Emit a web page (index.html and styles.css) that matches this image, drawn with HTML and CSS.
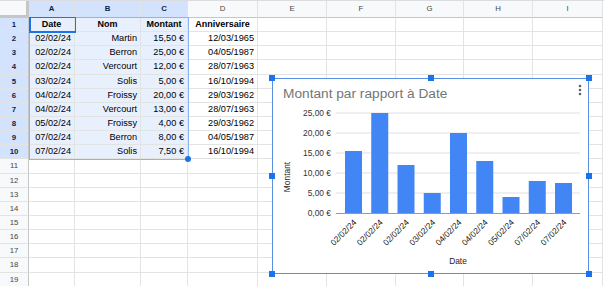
FILE: index.html
```html
<!DOCTYPE html>
<html lang="fr">
<head>
  <meta charset="UTF-8">
  <title>Feuille - Montant par rapport à Date</title>
  <link rel="stylesheet" href="styles.css">
</head>
<body>
  <div class="sheet-wrap">
    <div class="sheet">
      <!-- column headers -->
      <div class="corner"></div>
      <div class="ch on">A</div><div class="ch on">B</div><div class="ch on">C</div><div class="ch">D</div>
      <div class="ch">E</div><div class="ch">F</div><div class="ch">G</div><div class="ch">H</div><div class="ch">I</div>

      <!-- row 1 -->
      <div class="rh on">1</div>
      <div class="c sel hd">Date</div><div class="c sel hd">Nom</div><div class="c sel hd">Montant</div><div class="c hd">Anniversaire</div>
      <div class="c"></div><div class="c"></div><div class="c"></div><div class="c"></div><div class="c"></div>

      <!-- row 2 -->
      <div class="rh on">2</div>
      <div class="c sel num">02/02/24</div><div class="c sel num">Martin</div><div class="c sel num">15,50 €</div><div class="c num">12/03/1965</div>
      <div class="c"></div><div class="c"></div><div class="c"></div><div class="c"></div><div class="c"></div>

      <!-- row 3 -->
      <div class="rh on">3</div>
      <div class="c sel num">02/02/24</div><div class="c sel num">Berron</div><div class="c sel num">25,00 €</div><div class="c num">04/05/1987</div>
      <div class="c"></div><div class="c"></div><div class="c"></div><div class="c"></div><div class="c"></div>

      <!-- row 4 -->
      <div class="rh on">4</div>
      <div class="c sel num">02/02/24</div><div class="c sel num">Vercourt</div><div class="c sel num">12,00 €</div><div class="c num">28/07/1963</div>
      <div class="c"></div><div class="c"></div><div class="c"></div><div class="c"></div><div class="c"></div>

      <!-- row 5 -->
      <div class="rh on">5</div>
      <div class="c sel num">03/02/24</div><div class="c sel num">Solis</div><div class="c sel num">5,00 €</div><div class="c num">16/10/1994</div>
      <div class="c"></div><div class="c"></div><div class="c"></div><div class="c"></div><div class="c"></div>

      <!-- row 6 -->
      <div class="rh on">6</div>
      <div class="c sel num">04/02/24</div><div class="c sel num">Froissy</div><div class="c sel num">20,00 €</div><div class="c num">29/03/1962</div>
      <div class="c"></div><div class="c"></div><div class="c"></div><div class="c"></div><div class="c"></div>

      <!-- row 7 -->
      <div class="rh on">7</div>
      <div class="c sel num">04/02/24</div><div class="c sel num">Vercourt</div><div class="c sel num">13,00 €</div><div class="c num">28/07/1963</div>
      <div class="c"></div><div class="c"></div><div class="c"></div><div class="c"></div><div class="c"></div>

      <!-- row 8 -->
      <div class="rh on">8</div>
      <div class="c sel num">05/02/24</div><div class="c sel num">Froissy</div><div class="c sel num">4,00 €</div><div class="c num">29/03/1962</div>
      <div class="c"></div><div class="c"></div><div class="c"></div><div class="c"></div><div class="c"></div>

      <!-- row 9 -->
      <div class="rh on">9</div>
      <div class="c sel num">07/02/24</div><div class="c sel num">Berron</div><div class="c sel num">8,00 €</div><div class="c num">04/05/1987</div>
      <div class="c"></div><div class="c"></div><div class="c"></div><div class="c"></div><div class="c"></div>

      <!-- row 10 -->
      <div class="rh on">10</div>
      <div class="c sel num">07/02/24</div><div class="c sel num">Solis</div><div class="c sel num">7,50 €</div><div class="c num">16/10/1994</div>
      <div class="c"></div><div class="c"></div><div class="c"></div><div class="c"></div><div class="c"></div>

      <!-- empty rows -->
      <div class="rh">11</div>
      <div class="c"></div><div class="c"></div><div class="c"></div><div class="c"></div><div class="c"></div><div class="c"></div><div class="c"></div><div class="c"></div><div class="c"></div>
      <div class="rh">12</div>
      <div class="c"></div><div class="c"></div><div class="c"></div><div class="c"></div><div class="c"></div><div class="c"></div><div class="c"></div><div class="c"></div><div class="c"></div>
      <div class="rh">13</div>
      <div class="c"></div><div class="c"></div><div class="c"></div><div class="c"></div><div class="c"></div><div class="c"></div><div class="c"></div><div class="c"></div><div class="c"></div>
      <div class="rh">14</div>
      <div class="c"></div><div class="c"></div><div class="c"></div><div class="c"></div><div class="c"></div><div class="c"></div><div class="c"></div><div class="c"></div><div class="c"></div>
      <div class="rh">15</div>
      <div class="c"></div><div class="c"></div><div class="c"></div><div class="c"></div><div class="c"></div><div class="c"></div><div class="c"></div><div class="c"></div><div class="c"></div>
      <div class="rh">16</div>
      <div class="c"></div><div class="c"></div><div class="c"></div><div class="c"></div><div class="c"></div><div class="c"></div><div class="c"></div><div class="c"></div><div class="c"></div>
      <div class="rh">17</div>
      <div class="c"></div><div class="c"></div><div class="c"></div><div class="c"></div><div class="c"></div><div class="c"></div><div class="c"></div><div class="c"></div><div class="c"></div>
      <div class="rh">18</div>
      <div class="c"></div><div class="c"></div><div class="c"></div><div class="c"></div><div class="c"></div><div class="c"></div><div class="c"></div><div class="c"></div><div class="c"></div>
      <div class="rh">19</div>
      <div class="c"></div><div class="c"></div><div class="c"></div><div class="c"></div><div class="c"></div><div class="c"></div><div class="c"></div><div class="c"></div><div class="c"></div>
    </div>

    <!-- selection A1:C10 -->
    <div class="selection"></div>
    <div class="active-cell"></div>
    <div class="fill-handle"></div>

    <!-- embedded chart -->
    <div class="chart">
      <svg class="chart-svg" width="315" height="194" viewBox="0 0 315 194">
        <text class="chart-title" x="10" y="19">Montant par rapport à Date</text>
        <circle class="dot" cx="307" cy="7" r="1.3"/>
        <circle class="dot" cx="307" cy="11" r="1.3"/>
        <circle class="dot" cx="307" cy="15" r="1.3"/>

        <g class="grid">
          <line x1="63" y1="34" x2="307" y2="34"/>
          <line x1="63" y1="54" x2="307" y2="54"/>
          <line x1="63" y1="74" x2="307" y2="74"/>
          <line x1="63" y1="94" x2="307" y2="94"/>
          <line x1="63" y1="114" x2="307" y2="114"/>
        </g>

        <g class="ylab">
          <text x="58" y="37">25,00 €</text>
          <text x="58" y="57">20,00 €</text>
          <text x="58" y="77">15,00 €</text>
          <text x="58" y="97">10,00 €</text>
          <text x="58" y="117">5,00 €</text>
          <text x="58" y="137">0,00 €</text>
        </g>

        <g class="bars">
          <rect x="72" y="72" width="17" height="62"/>
          <rect x="98.25" y="34" width="17" height="100"/>
          <rect x="124.5" y="86" width="17" height="48"/>
          <rect x="150.75" y="114" width="17" height="20"/>
          <rect x="177" y="54" width="17" height="80"/>
          <rect x="203.25" y="82" width="17" height="52"/>
          <rect x="229.5" y="118" width="17" height="16"/>
          <rect x="255.75" y="102" width="17" height="32"/>
          <rect x="282" y="104" width="17" height="30"/>
        </g>
        <line class="baseline" x1="63" y1="134.5" x2="307" y2="134.5"/>

        <g class="xlab">
          <text transform="translate(84 144) rotate(-45)">02/02/24</text>
          <text transform="translate(110.25 144) rotate(-45)">02/02/24</text>
          <text transform="translate(136.5 144) rotate(-45)">02/02/24</text>
          <text transform="translate(162.75 144) rotate(-45)">03/02/24</text>
          <text transform="translate(189 144) rotate(-45)">04/02/24</text>
          <text transform="translate(215.25 144) rotate(-45)">04/02/24</text>
          <text transform="translate(241.5 144) rotate(-45)">05/02/24</text>
          <text transform="translate(267.75 144) rotate(-45)">07/02/24</text>
          <text transform="translate(294 144) rotate(-45)">07/02/24</text>
        </g>

        <text class="axis-title" x="185" y="185">Date</text>
        <text class="axis-title" transform="translate(17 98) rotate(-90)">Montant</text>
      </svg>

      <span class="handle tl"></span>
      <span class="handle tm"></span>
      <span class="handle tr"></span>
      <span class="handle ml"></span>
      <span class="handle mr"></span>
      <span class="handle bl"></span>
      <span class="handle bm"></span>
      <span class="handle br"></span>
    </div>
  </div>
</body>
</html>
```

FILE: styles.css
```css
body {
  margin: 0;
  padding: 0;
  overflow: hidden;
  background: #fff;
  font-family: "Liberation Sans", Arial, sans-serif;
  color: #1f1f1f;
}

.sheet-wrap {
  position: relative;
  width: 604px;
  height: 286px;
}

.sheet {
  display: grid;
  grid-template-columns: 29px 46px 66px 47px 70px 69px 69px 68px 69px 70px;
  grid-template-rows: 17px repeat(19, 14.15px);
  border-top: 1px solid #dadce0;
  box-sizing: border-box;
  width: 604px;
}

.sheet > div {
  box-sizing: border-box;
  border-right: 1px solid #e2e3e3;
  border-bottom: 1px solid #e2e3e3;
  white-space: nowrap;
  overflow: hidden;
}

.corner {
  background: #f8f9fa;
  border-right: 3px solid #c4c7c5 !important;
  border-bottom: 3px solid #c4c7c5 !important;
}

.ch {
  background: #f8f9fa;
  font-size: 7.8px;
  color: #444746;
  text-align: center;
  line-height: 16px;
  border-bottom-color: #c4c7c5 !important;
}

.ch.on {
  background: #d3e3fd;
  color: #0b1f44;
  font-weight: bold;
}

.rh {
  background: #f8f9fa;
  font-size: 7.8px;
  color: #444746;
  text-align: center;
  line-height: 13px;
  border-right-color: #c4c7c5 !important;
}

.rh.on {
  background: #d3e3fd;
  color: #0b1f44;
  font-weight: bold;
}

.c {
  font-size: 9.2px;
  line-height: 13.5px;
  padding: 0 3px;
  color: #000;
}

.c.sel {
  background: #e8f0fe;
}

.c.hd {
  font-weight: bold;
  text-align: center;
  font-size: 9px;
}

.c.num {
  text-align: right;
}

/* selection overlay */
.selection {
  position: absolute;
  left: 29px;
  top: 17px;
  width: 160px;
  height: 143px;
  box-sizing: border-box;
  border: 1px solid #8ab4f8;
  pointer-events: none;
}

.active-cell {
  position: absolute;
  left: 29px;
  top: 17px;
  width: 47px;
  height: 16px;
  box-sizing: border-box;
  border: 1px solid #1a73e8;
  border-left-width: 2px;
  border-bottom-width: 2px;
}

.fill-handle {
  position: absolute;
  left: 185px;
  top: 156px;
  width: 6px;
  height: 6px;
  border-radius: 50%;
  background: #1a73e8;
}

/* chart */
.chart {
  position: absolute;
  left: 272px;
  top: 78px;
  width: 317px;
  height: 196px;
  box-sizing: border-box;
  border: 1px solid #5b8fe4;
  background: #fff;
}

.chart-svg {
  display: block;
  overflow: visible;
  font-family: "Liberation Sans", Arial, sans-serif;
}

.chart-title {
  font-size: 13.7px;
  fill: #757575;
}

.dot {
  fill: #5f6368;
}

.grid line {
  stroke: #e0e0e0;
  stroke-width: 1;
}

.baseline {
  stroke: #999;
  stroke-width: 1;
}

.ylab text {
  font-size: 8.4px;
  fill: #333;
  text-anchor: end;
}

.bars rect {
  fill: #4285f4;
}

.xlab text {
  font-size: 8.4px;
  fill: #222;
  text-anchor: end;
}

.axis-title {
  font-size: 8.4px;
  fill: #222;
  text-anchor: middle;
}

.handle {
  position: absolute;
  width: 6px;
  height: 6px;
  background: #1a73e8;
}

.handle.tl { left: -4px; top: -4px; }
.handle.tm { left: 155px; top: -4px; }
.handle.tr { right: -4px; top: -4px; }
.handle.ml { left: -4px; top: 94px; }
.handle.mr { right: -4px; top: 94px; }
.handle.bl { left: -4px; bottom: -4px; }
.handle.bm { left: 155px; bottom: -4px; }
.handle.br { right: -4px; bottom: -4px; }
```
